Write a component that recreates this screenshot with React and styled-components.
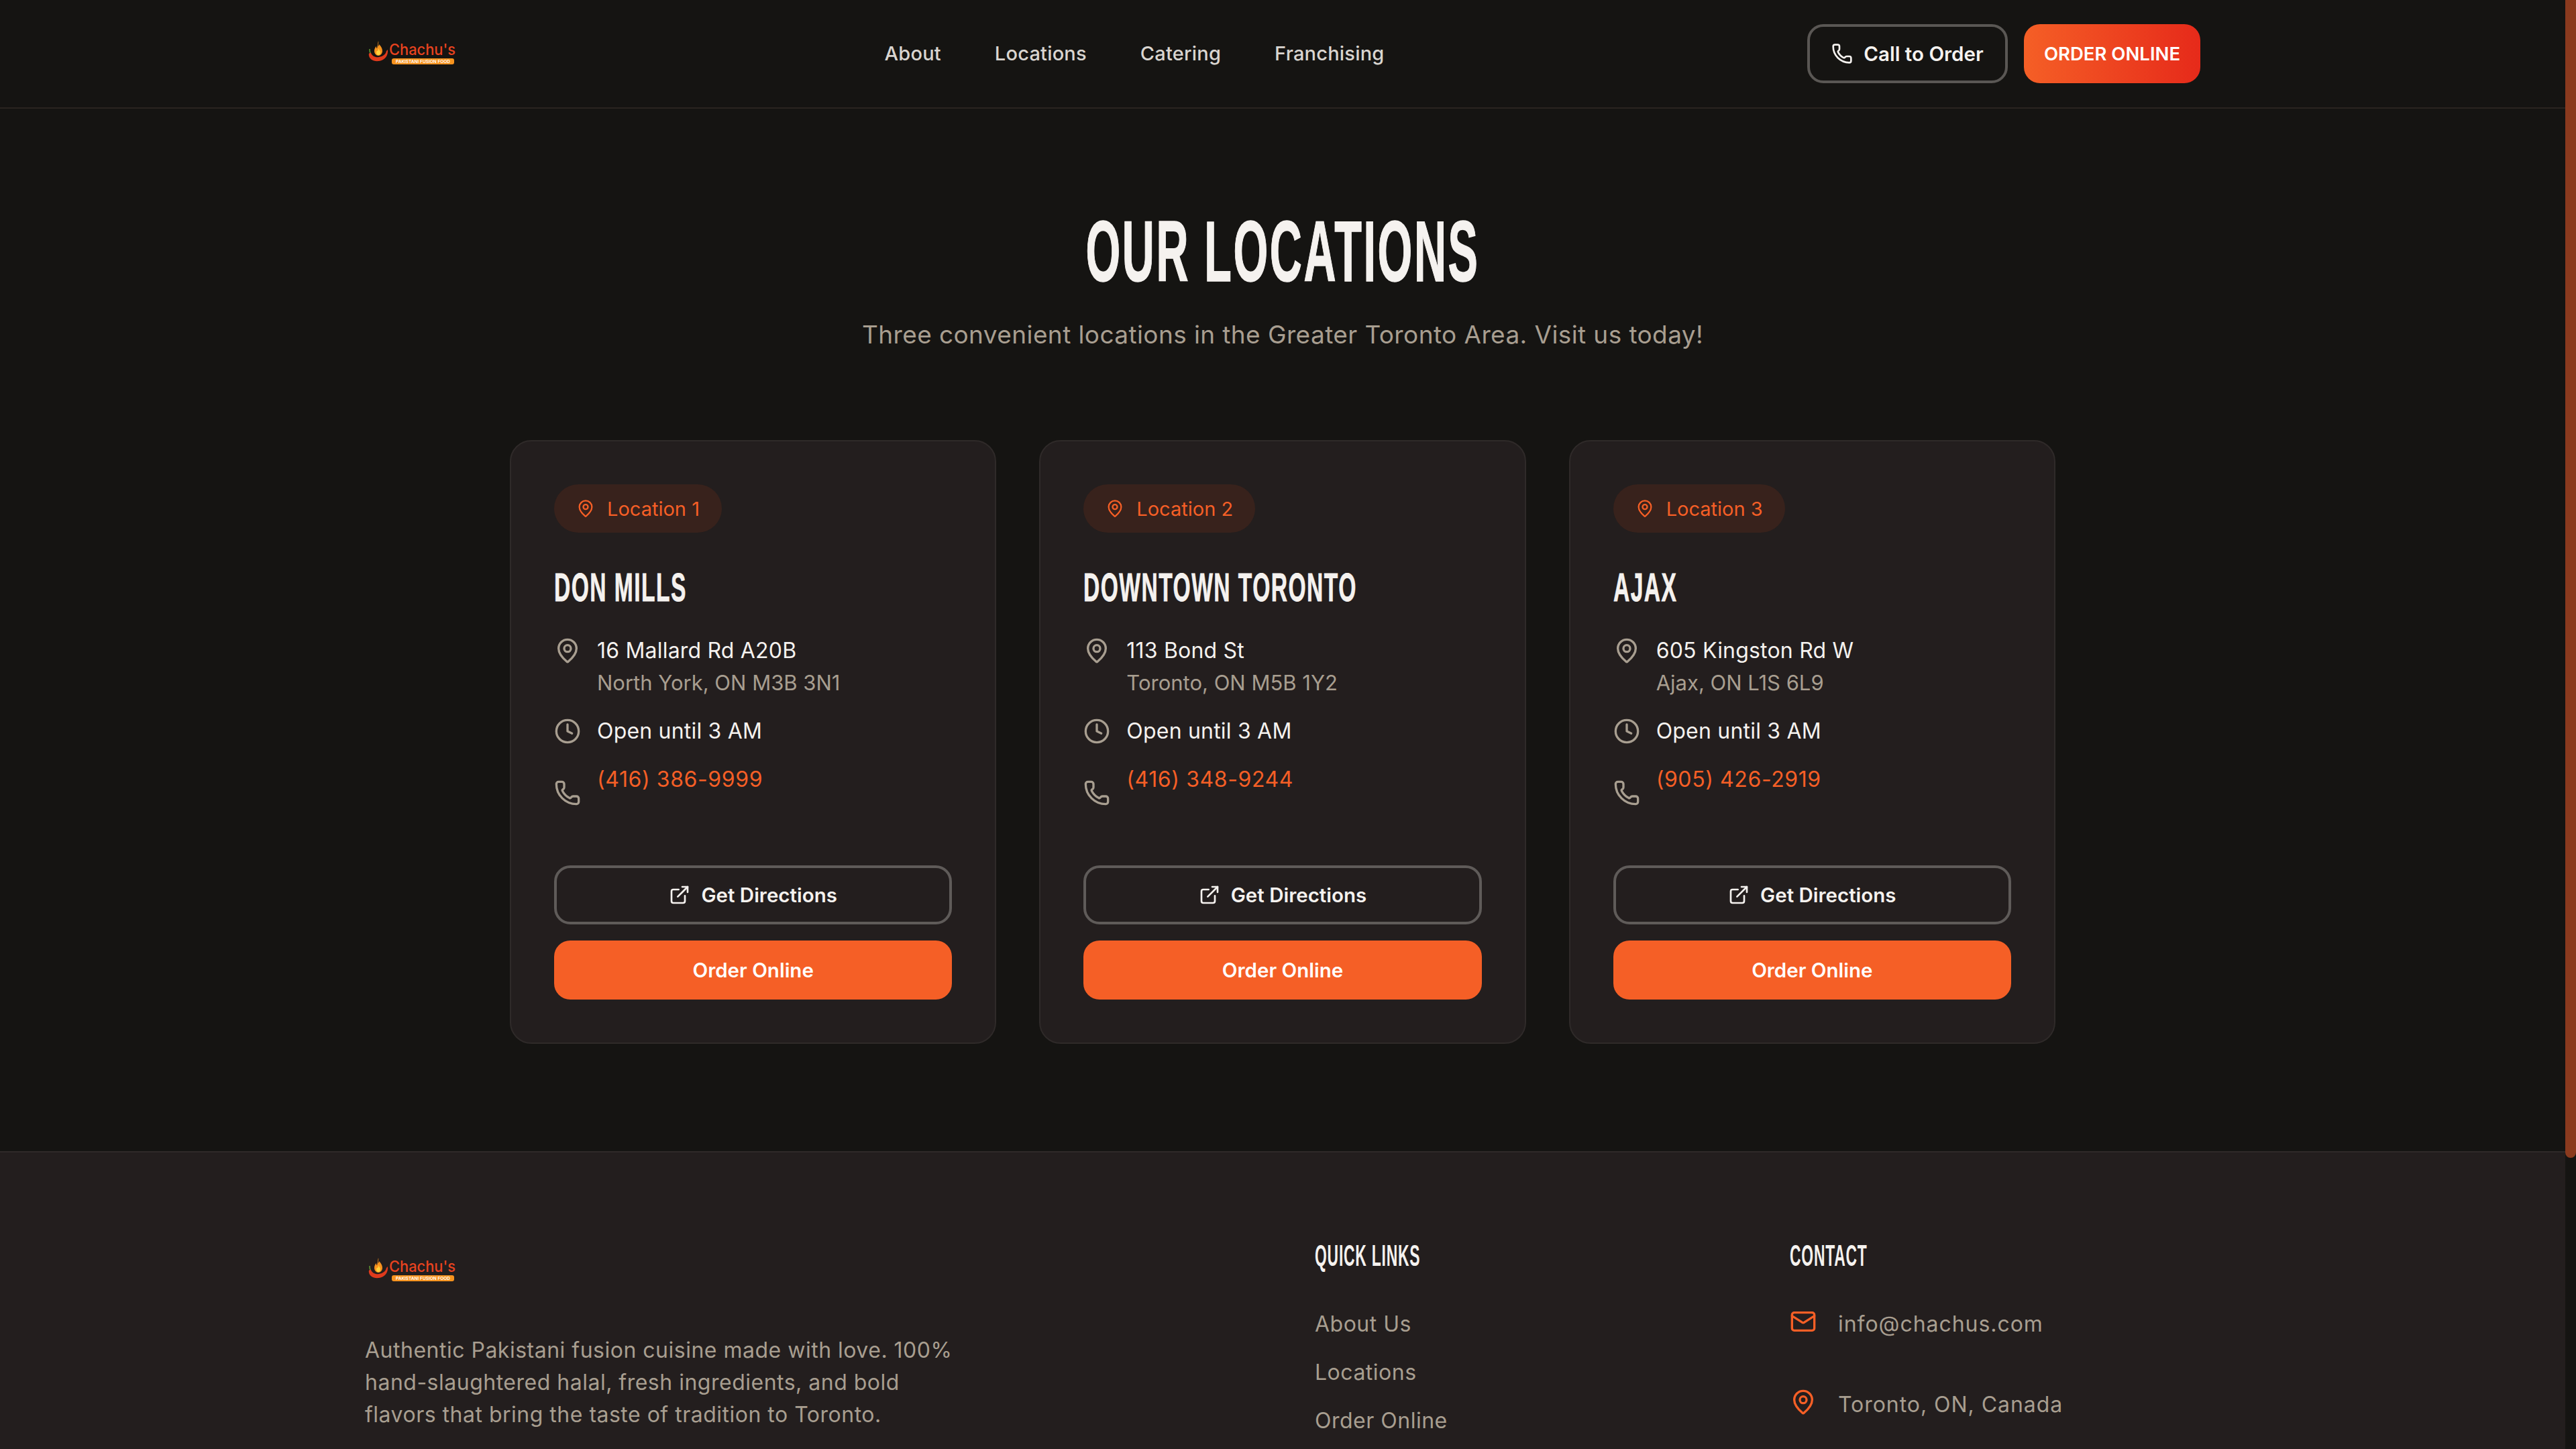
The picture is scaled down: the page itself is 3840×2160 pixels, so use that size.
import styled, { createGlobalStyle } from 'styled-components';
import { MapPin, Clock, Phone, ExternalLink, Mail } from 'lucide-react';

const locations = [
  { id: 1, name: 'Don Mills', street: '16 Mallard Rd A20B', city: 'North York, ON M3B 3N1', phone: '(416) 386-9999' },
  { id: 2, name: 'Downtown Toronto', street: '113 Bond St', city: 'Toronto, ON M5B 1Y2', phone: '(416) 348-9244' },
  { id: 3, name: 'Ajax', street: '605 Kingston Rd W', city: 'Ajax, ON L1S 6L9', phone: '(905) 426-2919' },
];

function Logo() {
  return (
    <LogoSvg viewBox="0 0 144 96" role="img" aria-label="Chachu's">
      <path d="M20 29c1 3-1 5 0 8 1-1 1-2 1-3 3 3 5 6 5 10 0 4-3 7-6 7s-6-3-6-7c0-3 1-5 3-7 0 2 0 3 1 3 1-3 1-7 2-11z" fill="#f7931e" />
      <path d="M20 40c1 2 3 4 3 6 0 3-1 4-3 4s-3-1-3-4c0-1 1-2 1-3 0 1 1 1 1 1 1-1 1-3 1-4z" fill="#ffd23c" />
      <path d="M9 47c2 5 7 7 12 6 6-1 10-4 11-9l2-2c1 8-4 16-13 17-9 1-14-3-15-8-1-3 1-5 3-4z" fill="#e03a1c" />
      <path d="M8 47c-1-2-1-4-1-6" stroke="#5f9a32" strokeWidth="1.5" fill="none" />
      <text x="36" y="50" fill="#e8431f" fontFamily="Inter, sans-serif" fontSize="23" fontWeight="500" textLength="99" lengthAdjust="spacingAndGlyphs">Chachu's</text>
      <rect x="40" y="55" width="93" height="9" rx="3" fill="#f7931e" />
      <text x="46" y="62" fill="#fff" fontFamily="Inter, sans-serif" fontSize="6.5" fontWeight="600" textLength="81" lengthAdjust="spacingAndGlyphs">PAKISTANI FUSION FOOD</text>
    </LogoSvg>
  );
}

function LocationCard({ location }) {
  return (
    <Card>
      <Badge>
        <MapPin size={28} />
        Location {location.id}
      </Badge>
      <CardTitle>{location.name}</CardTitle>
      <InfoList>
        <InfoRow>
          <InfoIcon><MapPin size={40} /></InfoIcon>
          <div>
            <InfoText>{location.street}</InfoText>
            <InfoMuted>{location.city}</InfoMuted>
          </div>
        </InfoRow>
        <InfoRow>
          <InfoIcon><Clock size={40} /></InfoIcon>
          <InfoText>Open until 3 AM</InfoText>
        </InfoRow>
        <PhoneRow>
          <InfoIcon $flush><Phone size={40} /></InfoIcon>
          <PhoneLink>{location.phone}</PhoneLink>
        </PhoneRow>
      </InfoList>
      <Actions>
        <OutlineButton>
          <ExternalLink size={32} />
          Get Directions
        </OutlineButton>
        <SolidButton>Order Online</SolidButton>
      </Actions>
    </Card>
  );
}

export default function App() {
  return (
    <>
      <GlobalStyle />
      <Header>
        <HeaderInner>
          <Logo />
          <Nav>
            <NavLink>About</NavLink>
            <NavLink>Locations</NavLink>
            <NavLink>Catering</NavLink>
            <NavLink>Franchising</NavLink>
          </Nav>
          <HeaderActions>
            <CallButton>
              <Phone size={32} />
              Call to Order
            </CallButton>
            <OrderButton>ORDER ONLINE</OrderButton>
          </HeaderActions>
        </HeaderInner>
      </Header>
      <Section>
        <PageTitle>Our Locations</PageTitle>
        <Subtitle>Three convenient locations in the Greater Toronto Area. Visit us today!</Subtitle>
        <CardGrid>
          {locations.map(location => (
            <LocationCard key={location.id} location={location} />
          ))}
        </CardGrid>
      </Section>
      <Footer>
        <FooterGrid>
          <Brand>
            <Logo />
            <BrandText>
              Authentic Pakistani fusion cuisine made with love. 100% hand-slaughtered halal, fresh ingredients, and bold flavors that bring the taste of tradition to Toronto.
            </BrandText>
          </Brand>
          <div>
            <FooterHeading>Quick Links</FooterHeading>
            <LinkList>
              <FooterLink>About Us</FooterLink>
              <FooterLink>Locations</FooterLink>
              <FooterLink>Order Online</FooterLink>
            </LinkList>
          </div>
          <div>
            <FooterHeading>Contact</FooterHeading>
            <ContactList>
              <ContactRow>
                <Mail size={40} />
                info@chachus.com
              </ContactRow>
              <ContactRow>
                <MapPin size={40} />
                Toronto, ON, Canada
              </ContactRow>
            </ContactList>
          </div>
        </FooterGrid>
      </Footer>
      <ScrollTrack>
        <ScrollThumb />
      </ScrollTrack>
    </>
  );
}

/* styled components */
const GlobalStyle = createGlobalStyle`
  html {
    background: #151412;
  }
  body {
    margin: 0;
    width: 3824px;
    background: #151412;
    color: #f5f2ef;
    font-family: Inter, "Noto Sans", sans-serif;
  }
  * {
    box-sizing: border-box;
  }
`;

// the reference shows the page scrollbar, headless chrome hides the real one
const ScrollTrack = styled.div`
  position: fixed;
  top: 0;
  right: 0;
  width: 16px;
  height: 100vh;
  background: #151412;
`;

const ScrollThumb = styled.div`
  height: 1726px;
  background: #8b3a1e;
  border-radius: 0 0 8px 8px;
`;

const LogoSvg = styled.svg`
  width: 144px;
  height: 96px;
  display: block;
  flex-shrink: 0;
`;

const Header = styled.header`
  height: 162px;
  border-bottom: 2px solid #2a2420;
`;

const HeaderInner = styled.div`
  width: 2736px;
  height: 160px;
  margin: 0 auto;
  display: flex;
  align-items: center;
  justify-content: space-between;
`;

const Nav = styled.nav`
  display: flex;
  gap: 80px;
`;

const NavLink = styled.a`
  font-size: 29px;
  font-weight: 500;
  letter-spacing: 0.2px;
  line-height: 40px;
  color: #d9d5d0;
`;

const HeaderActions = styled.div`
  display: flex;
  gap: 24px;
`;

const BaseButton = styled.button`
  height: 88px;
  border-radius: 24px;
  font-family: inherit;
  font-size: 29.5px;
  font-weight: 600;
  display: flex;
  align-items: center;
  justify-content: center;
  gap: 16px;
  color: #f5f2ef;
`;

const CallButton = styled(BaseButton)`
  width: 299px;
  padding: 0;
  background: transparent;
  border: 4px solid #5a5754;
`;

const OrderButton = styled(BaseButton)`
  width: 263px;
  padding: 0;
  border: none;
  font-size: 27.5px;
  color: #fff;
  background: linear-gradient(90deg, #f55f26, #e62a1a);
`;

const Section = styled.section`
  padding: 160px 0;
`;

const PageTitle = styled.h1`
  margin: 0 0 43px;
  font-family: "Liberation Sans", sans-serif;
  font-size: 128px;
  line-height: 106px;
  font-weight: 700;
  letter-spacing: 5px;
  text-align: center;
  text-transform: uppercase;
  white-space: nowrap;
  color: #f5f2ef;
  -webkit-text-stroke: 1.5px #f5f2ef;
  transform: scaleX(0.52);
`;

const Subtitle = styled.p`
  margin: 0 0 129px;
  font-size: 37px;
  line-height: 56px;
  letter-spacing: 0.4px;
  text-align: center;
  color: #a89e90;
`;

const CardGrid = styled.div`
  width: 2304px;
  margin: 0 auto;
  display: grid;
  grid-template-columns: repeat(3, minmax(0, 1fr));
  gap: 64px;
`;

const Card = styled.article`
  background: #231e1e;
  border: 2px solid #2f2a29;
  border-radius: 32px;
  padding: 64px;
`;

const Badge = styled.span`
  display: inline-flex;
  align-items: center;
  gap: 18px;
  height: 72px;
  padding: 0 33px;
  border-radius: 36px;
  background: #38221c;
  color: #f55f26;
  font-size: 29px;
`;

const CardTitle = styled.h3`
  margin: 46px 0 34px;
  font-family: "Liberation Sans", sans-serif;
  font-size: 60px;
  line-height: 72px;
  font-weight: 700;
  letter-spacing: 2.6px;
  text-transform: uppercase;
  white-space: nowrap;
  color: #f5f2ef;
  -webkit-text-stroke: 0.8px #f5f2ef;
  transform: scaleX(0.56);
  transform-origin: left center;
`;

const InfoList = styled.div`
  display: flex;
  flex-direction: column;
  gap: 24px;
`;

const InfoRow = styled.div`
  display: flex;
  align-items: flex-start;
  gap: 24px;
`;

const PhoneRow = styled(InfoRow)`
  align-items: center;
`;

const InfoIcon = styled.span`
  display: flex;
  margin-top: ${props => (props.$flush ? '0' : '4px')};
  color: #a89e90;
`;

const InfoText = styled.div`
  font-size: 32px;
  line-height: 48px;
  letter-spacing: 0.2px;
  color: #f5f2ef;
`;

const InfoMuted = styled(InfoText)`
  font-size: 31px;
  letter-spacing: 0;
  color: #a89e90;
`;

const PhoneLink = styled.a`
  display: block;
  height: 88px;
  font-size: 32px;
  line-height: 48px;
  letter-spacing: 0.6px;
  color: #f55f26;
`;

const Actions = styled.div`
  margin-top: 64px;
  display: flex;
  flex-direction: column;
  gap: 24px;
`;

const OutlineButton = styled(BaseButton)`
  width: 100%;
  background: transparent;
  border: 4px solid #5f5b59;
`;

const SolidButton = styled(BaseButton)`
  width: 100%;
  border: none;
  color: #fff;
  background: #f55f26;
`;

const Footer = styled.footer`
  min-height: 989px;
  background: #231e1e;
  border-top: 2px solid #2f2a29;
  padding-top: 128px;
`;

const FooterGrid = styled.div`
  width: 2736px;
  margin: 0 auto;
  display: grid;
  grid-template-columns: repeat(4, minmax(0, 1fr));
  gap: 96px;
`;

const Brand = styled.div`
  grid-column: span 2;
`;

const BrandText = styled.p`
  margin: 47px 0 0;
  width: 900px;
  font-size: 32px;
  line-height: 48px;
  letter-spacing: 0.5px;
  color: #a89e90;
`;

const FooterHeading = styled.h4`
  margin: 2px 0 54px;
  font-family: "Liberation Sans", sans-serif;
  font-size: 44px;
  line-height: 48px;
  font-weight: 700;
  letter-spacing: 1.5px;
  text-transform: uppercase;
  white-space: nowrap;
  color: #f5f2ef;
  transform: scaleX(0.52);
  transform-origin: left center;
`;

const LinkList = styled.div`
  display: flex;
  flex-direction: column;
  gap: 24px;
`;

const FooterLink = styled.a`
  font-size: 32px;
  line-height: 48px;
  letter-spacing: 0.5px;
  color: #a89e90;
`;

const ContactList = styled.div`
  display: flex;
  flex-direction: column;
  gap: 72px;
`;

const ContactRow = styled.div`
  display: flex;
  align-items: flex-start;
  gap: 32px;
  font-size: 32px;
  line-height: 48px;
  letter-spacing: 0.95px;
  color: #a89e90;

  svg {
    color: #f55f26;
    flex-shrink: 0;
  }
`;
